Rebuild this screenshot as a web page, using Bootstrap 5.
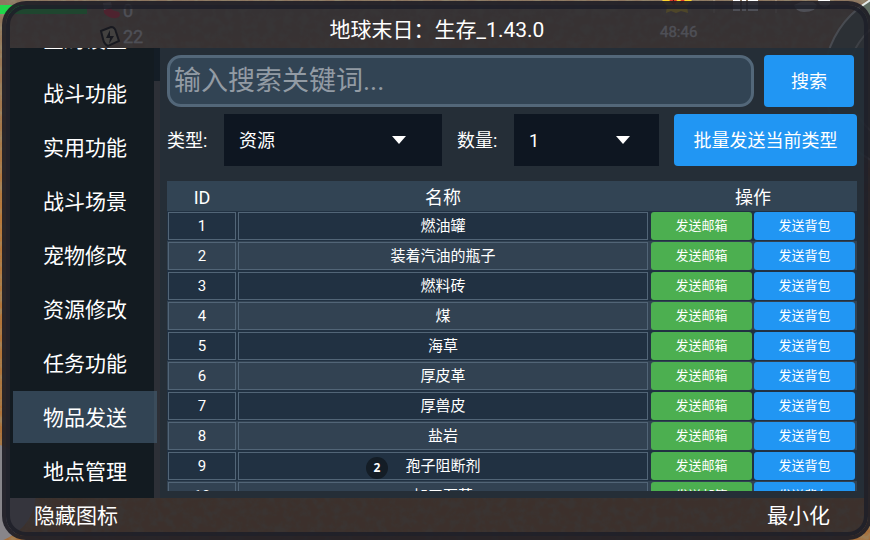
<!DOCTYPE html>
<html lang="zh-CN">
<head>
<meta charset="utf-8">
<meta name="viewport" content="width=device-width, initial-scale=1">
<title>地球末日：生存_1.43.0</title>
<link href="https://cdn.jsdelivr.net/npm/bootstrap@5.3.0/dist/css/bootstrap.min.css" rel="stylesheet">
<style>
body { font-family: Roboto, "Noto Sans CJK SC", sans-serif; color: #fff; background: #7d674d; }
.scene { z-index: -1; }
.shell { padding: 1px 0 0 2px; margin-right: -2px; }
.tool-window { border: 4px solid rgba(31,30,38,.93); border-radius: 24px; background: rgba(30,32,40,.79); background-clip: padding-box; }
.tool-inner { border: 4px solid rgba(29,30,40,.85); border-radius: 20px; overflow: hidden; }
.title-bar { height: 39px; font-size: 21px; line-height: 42px; }
.foot-bar { height: 34px; padding: 0 34px 0 24px; }
.foot-bar button { font-size: 21px; line-height: 36px; color: #fff; }
.foot-bar button:hover { color: #cfe6fa; }
.side-nav { width: 150px; padding: 0 3px 1px; gap: 2px; background: linear-gradient(90deg, #131b21 144px, #2d3037 144px); position: relative; }
.side-nav::before { content: ""; position: absolute; right: 0; top: 0; width: 6px; height: 33px; background: #141d26; }
.side-nav a { position: relative; flex: none; width: 144px; height: 52px; line-height: 54px; font-size: 21px; color: #fff; text-decoration: none; text-align: center; }
.side-nav a.active { background: linear-gradient(90deg, #324454 141px, #3b4c5b 141px); }
.work-area { background: rgba(36,46,56,.95); padding: 7px; }
.search-row { gap: 10px; }
.search-box { height: 52px; padding: 0 4px; font-size: 27px; line-height: 46px; color: #fff; background: #324454; border: 3px solid #536779; border-radius: 14px; }
.search-box:focus { background: #324454; color: #fff; }
.search-box::placeholder { color: #929ba4; opacity: 1; }
.btn-act { height: 52px; font-size: 18px; padding: 0; color: #fff; background: #2196f3; border: 0; border-radius: 4px; }
.btn-act:hover { background: #1e88e5; color: #fff; }
.btn-find { width: 90px; margin-right: 3px; }
.btn-batch { width: 183px; }
.filter-row { gap: 15px; padding: 7px 0 15px; font-size: 18px; }
.filter-row label { width: 42px; white-space: nowrap; }
.drop { height: 52px; padding: 0 15px; font-size: 18px; color: #fff; border: 0; border-radius: 0; background: #0e1621 url("data:image/svg+xml,%3Csvg xmlns='http://www.w3.org/2000/svg' viewBox='0 0 14 8'%3E%3Cpath fill='white' d='M0 0h14L7 8z'/%3E%3C/svg%3E") no-repeat right 36px center / 14px 8px; }
.drop-count { background-position: right 29px center; width: 145px; }
.list-area { background: #324454; }
.item-table { width: 100%; table-layout: fixed; border-collapse: collapse; text-align: center; font-size: 15px; }
.item-table th { height: 30px; padding: 4px 0 0; font-size: 18px; line-height: 26px; font-weight: 400; }
.item-table td { padding: 1px; height: 30px; }
.item-table tbody tr { background: #213142; }
.item-table tbody tr:nth-child(even) { background: #324252; box-shadow: inset 0 -1px #213142; }
.col-id { width: 70px; }
.col-ops { width: 208px; }
.cell-box { height: 28px; line-height: 26px; border: 1px solid #526577; }
.ops-box { gap: 2px; padding: 0 1px; }
.btn-send { flex: 1; height: 28px; padding: 0; line-height: 28px; font-size: 13px; border: 0; border-radius: 3px; color: #fff; background: #2196f3; }
.btn-send.to-mail { background: #4caf50; }
.btn-send:hover { color: #fff; background: #1e88e5; }
.touch-mark { left: 366px; top: 457px; width: 22px; height: 22px; font: 700 12px/22px "Open Sans", sans-serif; background: #141d26; }
</style>
<script src="https://cdn.jsdelivr.net/npm/bootstrap@5.3.0/dist/js/bootstrap.bundle.min.js"></script>
</head>
<body class="vh-100 overflow-hidden position-relative">
<svg class="scene position-absolute top-0 start-0 w-100 h-100" viewBox="0 0 870 540" preserveAspectRatio="none" aria-hidden="true">
  <defs>
    <linearGradient id="soil" x1="0" y1="0" x2="0" y2="1"><stop offset="0" stop-color="#8d7660"/><stop offset=".4" stop-color="#b9793a"/><stop offset="1" stop-color="#a86e38"/></linearGradient>
    <filter id="grit" x="0" y="0" width="100%" height="100%"><feTurbulence type="fractalNoise" baseFrequency=".12" numOctaves="4" seed="5"/><feColorMatrix values="0 0 0 0 .3  0 0 0 0 .3  0 0 0 0 .2  0 3 0 0 -1.2"/></filter>
  </defs>
  <rect width="870" height="540" fill="url(#soil)"/>
  <rect width="870" height="540" filter="url(#grit)" opacity=".45"/>
  <rect y="5" width="87" height="9" fill="#22d64a"/>
  <g fill="#5f6d62" stroke="#e4ebe8" stroke-width="2"><circle cx="916" cy="80" r="92"/><circle cx="916" cy="80" r="68" fill="none" opacity=".6"/></g>
  <circle cx="-14" cy="493" r="50" fill="#88858a"/>
  <path d="M103 3l8-1 1 8 7 2q3 5-3 6-7 1-12-5z" fill="#ff3346"/><path d="M103 3l8-1 1 5-8 3z" fill="#fff"/>
  <path d="M101 31l10-4q4 0 5 5l3 9-11 5q-4-2-5-7z" fill="#c9bd95" stroke="#000" stroke-width="2"/><path d="M110 30l-4 8h4l-1 6 5-8h-4z"/>
  <path d="M662 0h30l-5 6 1 7-7-2-5 2-5-2-5 2 1-7z" fill="#ffd52e"/><path d="M670 0l4 3 2-3m4 3l4-3" stroke="#e43c28" stroke-width="3"/>
  <path d="M733 0h7v11h-7zm9 0h4v11h-4zm6 0h10v11h-10zM794 5q2 7 10 7 12 0 13-7l-4-3h-12zM818 0h12v4l-4 3q-7 0-8-7" fill="#fff"/>
  <path d="M714 0v13M776 0v13" stroke="#b5a894"/>
  <g fill="#fff" stroke="#fff" stroke-width=".3" font-family="Roboto, sans-serif"><text x="123" y="17" font-size="18">0</text><text x="123" y="43" font-size="18">22</text><text x="660" y="37" font-size="15">48:46</text></g>
</svg>
<div class="shell vh-100">
<div class="tool-window h-100">
<div class="tool-inner h-100 d-flex flex-column">
  <header class="title-bar text-center flex-shrink-0">地球末日：生存_1.43.0</header>
  <div class="d-flex flex-grow-1 overflow-hidden">
    <nav class="side-nav d-flex flex-column justify-content-end flex-shrink-0 overflow-hidden">
      <a href="#">全局设置</a>
      <a href="#">战斗功能</a>
      <a href="#">实用功能</a>
      <a href="#">战斗场景</a>
      <a href="#">宠物修改</a>
      <a href="#">资源修改</a>
      <a href="#">任务功能</a>
      <a href="#" class="active" aria-current="page">物品发送</a>
      <a href="#">地点管理</a>
    </nav>
    <main class="work-area flex-grow-1 d-flex flex-column overflow-hidden">
      <div class="search-row d-flex flex-shrink-0">
        <input type="text" class="search-box form-control flex-grow-1 w-auto" placeholder="输入搜索关键词..." aria-label="搜索关键词">
        <button type="button" class="btn btn-act btn-find flex-shrink-0">搜索</button>
      </div>
      <div class="filter-row d-flex align-items-center flex-shrink-0">
        <label for="kind">类型:</label>
        <select id="kind" class="drop form-select flex-grow-1 w-auto"><option>资源</option></select>
        <label for="count">数量:</label>
        <select id="count" class="drop drop-count form-select flex-shrink-0"><option>1</option></select>
        <button type="button" class="btn btn-act btn-batch flex-shrink-0">批量发送当前类型</button>
      </div>
      <div class="list-area flex-grow-1 overflow-hidden">
        <table class="item-table">
          <colgroup><col class="col-id"><col><col class="col-ops"></colgroup>
          <thead><tr><th>ID</th><th>名称</th><th>操作</th></tr></thead>
          <tbody id="items"></tbody>
        </table>
      </div>
    </main>
  </div>
  <footer class="foot-bar d-flex justify-content-between flex-shrink-0">
    <button type="button" class="btn p-0 border-0">隐藏图标</button>
    <button type="button" class="btn p-0 border-0">最小化</button>
  </footer>
</div>
</div>
</div>
<span class="touch-mark position-absolute rounded-circle text-center">2</span>
<script>
const names = ["燃油罐", "装着汽油的瓶子", "燃料砖", "煤", "海草", "厚皮革", "厚兽皮", "盐岩", "孢子阻断剂", "加工石英"];
document.getElementById("items").innerHTML = names.map((n, i) => `<tr>
  <td><div class="cell-box">${i + 1}</div></td>
  <td><div class="cell-box">${n}</div></td>
  <td><div class="ops-box d-flex"><button type="button" class="btn btn-send to-mail">发送邮箱</button><button type="button" class="btn btn-send">发送背包</button></div></td>
</tr>`).join("");
</script>
</body>
</html>
